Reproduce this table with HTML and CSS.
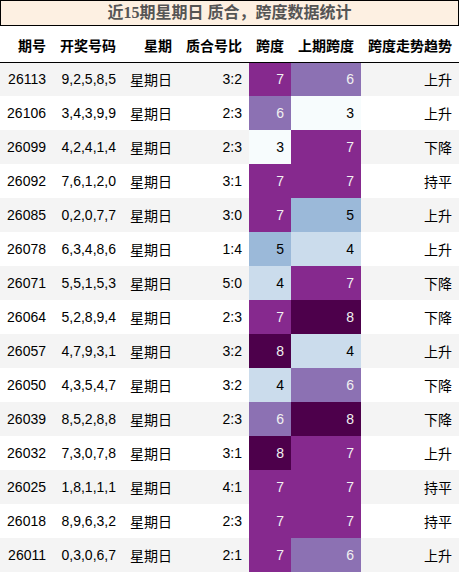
FILE: index.html
```html
<!doctype html>
<html lang="zh">

<head>
    <meta charset="utf-8">
    <title>近15期星期日 质合，跨度数据统计</title>
    <meta name="viewport" content="width=device-width, initial-scale=1">
    <link rel="stylesheet" href="styles.css">
</head>

<body>
    <div class="wrap">
        <div class="title">近15期星期日 质合，跨度数据统计</div>
        <table class="stats">
            <colgroup>
                <col class="c-issue">
                <col class="c-nums">
                <col class="c-day">
                <col class="c-ratio">
                <col class="c-span">
                <col class="c-prev">
                <col class="c-trend">
            </colgroup>
            <thead>
                <tr>
                    <th>期号</th>
                    <th>开奖号码</th>
                    <th>星期</th>
                    <th>质合号比</th>
                    <th>跨度</th>
                    <th>上期跨度</th>
                    <th>跨度走势趋势</th>
                </tr>
            </thead>
            <tbody>
                <tr><td>26113</td><td>9,2,5,8,5</td><td>星期日</td><td>3:2</td><td class="s7">7</td><td class="s6">6</td><td>上升</td></tr>
                <tr><td>26106</td><td>3,4,3,9,9</td><td>星期日</td><td>2:3</td><td class="s6">6</td><td class="s3">3</td><td>上升</td></tr>
                <tr><td>26099</td><td>4,2,4,1,4</td><td>星期日</td><td>2:3</td><td class="s3">3</td><td class="s7">7</td><td>下降</td></tr>
                <tr><td>26092</td><td>7,6,1,2,0</td><td>星期日</td><td>3:1</td><td class="s7">7</td><td class="s7">7</td><td>持平</td></tr>
                <tr><td>26085</td><td>0,2,0,7,7</td><td>星期日</td><td>3:0</td><td class="s7">7</td><td class="s5">5</td><td>上升</td></tr>
                <tr><td>26078</td><td>6,3,4,8,6</td><td>星期日</td><td>1:4</td><td class="s5">5</td><td class="s4">4</td><td>上升</td></tr>
                <tr><td>26071</td><td>5,5,1,5,3</td><td>星期日</td><td>5:0</td><td class="s4">4</td><td class="s7">7</td><td>下降</td></tr>
                <tr><td>26064</td><td>5,2,8,9,4</td><td>星期日</td><td>2:3</td><td class="s7">7</td><td class="s8">8</td><td>下降</td></tr>
                <tr><td>26057</td><td>4,7,9,3,1</td><td>星期日</td><td>3:2</td><td class="s8">8</td><td class="s4">4</td><td>上升</td></tr>
                <tr><td>26050</td><td>4,3,5,4,7</td><td>星期日</td><td>3:2</td><td class="s4">4</td><td class="s6">6</td><td>下降</td></tr>
                <tr><td>26039</td><td>8,5,2,8,8</td><td>星期日</td><td>2:3</td><td class="s6">6</td><td class="s8">8</td><td>下降</td></tr>
                <tr><td>26032</td><td>7,3,0,7,8</td><td>星期日</td><td>3:1</td><td class="s8">8</td><td class="s7">7</td><td>上升</td></tr>
                <tr><td>26025</td><td>1,8,1,1,1</td><td>星期日</td><td>4:1</td><td class="s7">7</td><td class="s7">7</td><td>持平</td></tr>
                <tr><td>26018</td><td>8,9,6,3,2</td><td>星期日</td><td>2:3</td><td class="s7">7</td><td class="s7">7</td><td>持平</td></tr>
                <tr><td>26011</td><td>0,3,0,6,7</td><td>星期日</td><td>2:1</td><td class="s7">7</td><td class="s6">6</td><td>上升</td></tr>
            </tbody>
        </table>
    </div>
</body>

</html>
```

FILE: styles.css
```css
* {
    margin: 0;
    padding: 0;
    box-sizing: border-box;
}

body {
    background: #fff;
    font-family: "Liberation Sans", "Noto Sans CJK SC", sans-serif;
    color: #000;
}

.wrap {
    width: 459px;
}

.title {
    height: 26px;
    line-height: 24px;
    border: 1px solid #000;
    background: #fdf0e2;
    color: #555;
    font-family: "Liberation Serif", "Noto Sans CJK SC", serif;
    font-size: 16px;
    font-weight: bold;
    text-align: center;
}

.stats {
    width: 459px;
    border-collapse: collapse;
    border-spacing: 0;
    table-layout: fixed;
    font-size: 14px;
}

.c-issue { width: 53px; }
.c-nums { width: 70px; }
.c-day { width: 56px; }
.c-ratio { width: 70px; }
.c-span { width: 42px; }
.c-prev { width: 70px; }
.c-trend { width: 98px; }

.stats th,
.stats td {
    height: 34px;
    padding: 0 7px;
    text-align: right;
    white-space: nowrap;
    vertical-align: middle;
}

.stats th {
    height: 36px;
    padding-top: 2px;
    font-weight: bold;
    border-bottom: 1px solid #000;
}

.stats tbody tr:nth-child(odd) {
    background: #f4f4f4;
}

/* span gradient, 3 (light) to 8 (dark) */
.stats .s3 { background: #f7fcfd; color: #000; }
.stats .s4 { background: #cbdcec; color: #000; }
.stats .s5 { background: #9bb9d9; color: #000; }
.stats .s6 { background: #8c71b3; color: #f1f1f1; }
.stats .s7 { background: #86298e; color: #f1f1f1; }
.stats .s8 { background: #4d004b; color: #f1f1f1; }
```
